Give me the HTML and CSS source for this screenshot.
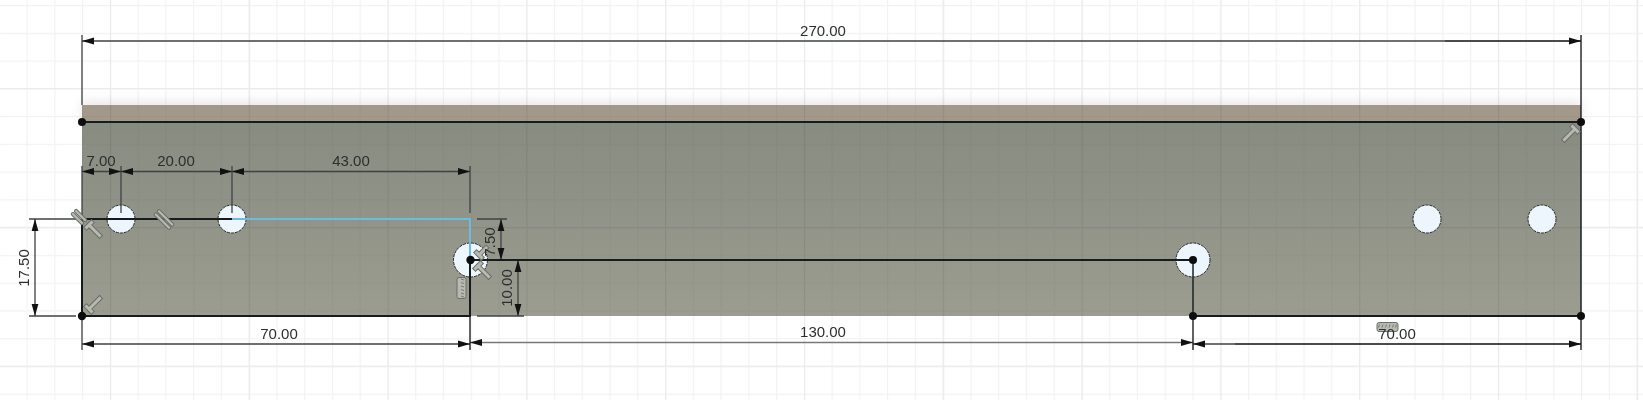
FILE: index.html
```html
<!DOCTYPE html>
<html lang="en">
<head>
<meta charset="utf-8">
<title>Sketch</title>
<link rel="stylesheet" href="styles.css">
</head>
<body>
<main class="canvas">
<svg class="sketch" width="1643" height="400" viewBox="0 0 1643 400" xmlns="http://www.w3.org/2000/svg">
  <defs>
    <pattern id="minor" width="27.76" height="27.76" patternUnits="userSpaceOnUse" x="26.5" y="5">
      <path class="grid-minor" d="M.5 0V27.76M0 .5H27.76"/>
    </pattern>
    <pattern id="major" width="138.8" height="138.8" patternUnits="userSpaceOnUse" x="110" y="88">
      <path class="grid-major" d="M.5 0V138.8M0 .5H138.8"/>
    </pattern>
    <linearGradient id="face" x1="0" y1="0" x2="0" y2="1">
      <stop offset="0" stop-color="#878c81"/>
      <stop offset=".35" stop-color="#8e9186"/>
      <stop offset="1" stop-color="#9c9d90"/>
    </linearGradient>
    <g id="arrow-l"><path d="M0 0L12 -3.4V3.4Z"/></g>
    <g id="arrow-r"><path d="M0 0L-12 -3.4V3.4Z"/></g>
    <g id="arrow-u"><path d="M0 0L-3.4 12H3.4Z"/></g>
    <g id="arrow-d"><path d="M0 0L-3.4 -12H3.4Z"/></g>
    <g id="tee">
      <path d="M-5.5 -2H5.5V2H2V17H-2V2H-5.5Z"/>
    </g>
    <g id="tee-short">
      <path d="M-5.5 -2H5.5V2H2V12H-2V2H-5.5Z"/>
    </g>
    <g id="parallel">
      <rect x="-11" y="-3.8" width="22" height="3.2" rx="1.6"/>
      <rect x="-11" y=".6" width="22" height="3.2" rx="1.6"/>
    </g>
    <g id="parallel-short">
      <rect x="-8" y="-3.8" width="16" height="3.2" rx="1.6"/>
      <rect x="-8" y=".6" width="16" height="3.2" rx="1.6"/>
    </g>
    <g id="comb">
      <rect x="-10.5" y="-4.5" width="21" height="9" rx="2"/>
      <path class="comb-teeth" d="M-8 -2.5L-9 .5M-4.5 -2.5L-5.5 .5M-1 -2.5L-2 .5M2.5 -2.5L1.5 .5M6 -2.5L5 .5M9 -2.5L8 .5"/>
    </g>
  </defs>

  <rect width="1643" height="400" fill="url(#minor)"/>
  <rect width="1643" height="400" fill="url(#major)"/>

  <rect class="part-top" x="82" y="105" width="1499" height="17"/>
  <rect x="82" y="122" width="1499" height="194" fill="url(#face)"/>
  <rect class="grid-over" x="82" y="105" width="1499" height="211" fill="url(#minor)"/>
  <rect class="grid-over" x="82" y="105" width="1499" height="211" fill="url(#major)"/>

  <g class="holes">
    <circle cx="121" cy="219" r="14"/>
    <circle cx="232" cy="219" r="14"/>
    <circle cx="1427" cy="219" r="14"/>
    <circle cx="1542" cy="219" r="14"/>
    <circle cx="470.5" cy="260" r="17"/>
    <circle cx="1193" cy="260" r="17"/>
  </g>

  <g class="dim-soft">
    <path d="M82 35V105M82 166V219M82 41H1445M82 171.5H470M121 166V213M232 166V213M470 166V213"/>
    <path d="M29 219H76M29 316H76M35 219V316M477 219H507M477 316H524M501 219V260M518 260V316"/>
    <path d="M82 344H470M82 316V350M1193 344H1235"/>
  </g>
  <path class="dim-faint" d="M470 342.5H1193"/>
  <g class="dim-dark">
    <path d="M1445 41H1581M1581 35V122M1235 344H1581M1581 316V350M470 316V350M1193 316V350"/>
  </g>

  <g class="sketch-line">
    <path d="M82 122H1581M82 219V316H470V260M82 219H232M470 260H1193M1193 316H1581"/>
  </g>
  <path class="sketch-thin" d="M1581 122V316M1193 260V316"/>
  <path class="sketch-active" d="M232 219H470V260"/>

  <g class="dots">
    <circle cx="82" cy="122" r="4"/>
    <circle cx="82" cy="316" r="4.2"/>
    <circle cx="470.5" cy="260" r="4.2"/>
    <circle cx="1193" cy="260" r="4"/>
    <circle cx="1193" cy="316" r="4"/>
    <circle cx="1581" cy="122" r="4"/>
    <circle cx="1581" cy="316" r="4"/>
  </g>

  <g class="arrows">
    <use href="#arrow-l" x="82" y="41"/>
    <use href="#arrow-r" x="1581" y="41"/>
    <use href="#arrow-l" x="82" y="171.5"/>
    <use href="#arrow-r" x="121" y="171.5"/>
    <use href="#arrow-l" x="121" y="171.5"/>
    <use href="#arrow-r" x="232" y="171.5"/>
    <use href="#arrow-l" x="232" y="171.5"/>
    <use href="#arrow-r" x="470" y="171.5"/>
    <use href="#arrow-u" x="35" y="219"/>
    <use href="#arrow-d" x="35" y="316"/>
    <use href="#arrow-u" x="501" y="219"/>
    <use href="#arrow-d" x="501" y="260"/>
    <use href="#arrow-u" x="518" y="260"/>
    <use href="#arrow-d" x="518" y="316"/>
    <use href="#arrow-l" x="82" y="344"/>
    <use href="#arrow-r" x="470" y="344"/>
    <use href="#arrow-l" x="470" y="342.5"/>
    <use href="#arrow-r" x="1193" y="342.5"/>
    <use href="#arrow-l" x="1193" y="344"/>
    <use href="#arrow-r" x="1581" y="344"/>
  </g>

  <g class="glyphs">
    <use href="#parallel-short" transform="translate(79 217) rotate(45)"/>
    <use href="#parallel" transform="translate(164 219.5) rotate(45)"/>
    <use href="#tee" transform="translate(89 225) rotate(-45)"/>
    <use href="#tee" transform="translate(89 309) rotate(-135)"/>
    <use href="#tee" transform="translate(1575 129) rotate(45)"/>
    <use href="#tee-short" transform="translate(479 255) rotate(-135)"/>
    <use href="#tee" transform="translate(478 266) rotate(-45)"/>
    <use href="#comb" transform="translate(461.5 288) rotate(90)"/>
    <use href="#comb" transform="translate(1387.5 327)"/>
  </g>

  <g class="labels">
    <text x="823" y="36">270.00</text>
    <text x="101" y="166">7.00</text>
    <text x="176" y="166">20.00</text>
    <text x="351" y="166">43.00</text>
    <text x="279" y="338.5">70.00</text>
    <text x="823" y="337">130.00</text>
    <text x="1397" y="338.5">70.00</text>
    <text transform="translate(29 268) rotate(-90)">17.50</text>
    <text transform="translate(495 242) rotate(-90)">7.50</text>
    <text transform="translate(512 288) rotate(-90)">10.00</text>
  </g>
</svg>
</main>
</body>
</html>
```

FILE: styles.css
```css
html, body {
  margin: 0;
  padding: 0;
  background: #ffffff;
  overflow: hidden;
}

.canvas {
  width: 1643px;
  height: 400px;
}

.sketch {
  display: block;
  filter: blur(.4px);
}

.grid-minor {
  fill: none;
  stroke: #f2f2f2;
  stroke-width: 1.3;
}

.grid-major {
  fill: none;
  stroke: #ebebeb;
  stroke-width: 1.3;
}

.grid-over {
  mix-blend-mode: multiply;
  opacity: .6;
}

.part-top {
  fill: #a2998a;
  filter: drop-shadow(0 -3px 6px rgba(0, 0, 0, .1));
}

.holes circle {
  fill: #eef6fd;
  stroke: #23282a;
  stroke-width: 1;
  stroke-dasharray: 3 1;
}

.dim-soft path {
  fill: none;
  stroke: #3f4343;
  stroke-width: 1.3;
}

.dim-faint {
  fill: none;
  stroke: #777777;
  stroke-width: 1.6;
}

.dim-dark path {
  fill: none;
  stroke: #111111;
  stroke-width: 1.3;
}

.sketch-line path {
  fill: none;
  stroke: #161c1e;
  stroke-width: 2;
}

.sketch-thin {
  fill: none;
  stroke: #1d2426;
  stroke-width: 1.5;
}

.sketch-active {
  fill: none;
  stroke: #6dbbe0;
  stroke-width: 2;
}

.dots circle {
  fill: #0d0d0d;
}

.arrows use {
  fill: #111111;
}

.glyphs use {
  fill: #b8bab1;
  stroke: #6b6e68;
  stroke-width: 1;
}

.comb-teeth {
  fill: none;
  stroke: #777a74;
  stroke-width: 1;
}

.labels text {
  font-family: "Liberation Sans", Arial, sans-serif;
  font-size: 15px;
  fill: #2b2f30;
  text-anchor: middle;
}
```
